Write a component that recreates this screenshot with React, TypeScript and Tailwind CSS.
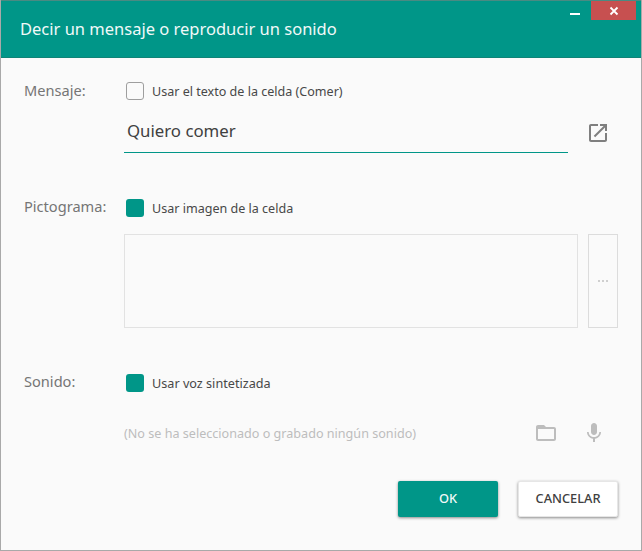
export default function App() {
  const font = { fontFamily: '"Noto Sans", sans-serif' };
  return (
    <div style={font} className="w-[642px] h-[551px] bg-[#fafafa] border border-t-0 border-[#a9a9a9] flex flex-col overflow-hidden">
      <header className="h-[58px] shrink-0 bg-[#009688] border-t border-t-[#4a8a82] border-b border-b-[#0f8477] flex items-start justify-between pl-[19px] pr-[5px]">
        <h1 className="mt-[17px] text-[16.5px] leading-[22px] text-[#f1f9f8] font-normal">Decir un mensaje o reproducir un sonido</h1>
        <div className="flex items-start">
          <div className="mt-[12px] mr-[11px] w-[10px] h-[2px] bg-white" />
          <div className="w-[45px] h-[19px] bg-[#c75050] flex items-center justify-center">
            <svg width="10" height="10" viewBox="0 0 10 10" stroke="white" strokeWidth="1.8"><path d="M1.500 1.500l7 7M8.500 1.500l-7 7" /></svg>
          </div>
        </div>
      </header>

      <main className="flex-1 flex flex-col pl-[23px] pr-[23px]">
        <section className="flex mt-[23px]">
          <div className="w-[100px] shrink-0 text-[14.6px] leading-[19px] text-[#757575]">Mensaje:</div>
          <div className="flex-1">
            <div className="flex items-center pl-[2px] h-[20px]">
              <div className="w-[18px] h-[18px] rounded-[3px] border border-[#9e9e9e] bg-[#fafafa]" />
              <span className="ml-[8px] pt-[2px] text-[12.55px] text-[#484848]">Usar el texto de la celda (Comer)</span>
            </div>
            <div className="flex items-start mt-[11px]">
              <div className="w-[444px] h-[41px] border-b border-b-[#009688] pl-[3px] pt-[8px] text-[16.8px] leading-[22px] text-[#404040]">Quiero comer</div>
              <svg className="ml-[18px] mt-[9px]" width="24" height="24" viewBox="0 0 24 24" fill="#7f7f7f"><path d="M19 19H5V5h7V3H5c-1.110 0-2 .9-2 2v14c0 1.100.89 2 2 2h14c1.100 0 2-.9 2-2v-7h-2v7zM14 3v2h3.590l-9.830 9.830 1.410 1.410L19 6.410V10h2V3h-7z" /></svg>
            </div>
          </div>
        </section>

        <section className="flex mt-[44px]">
          <div className="w-[100px] shrink-0 text-[14.6px] leading-[19px] text-[#757575]">Pictograma:</div>
          <div className="flex-1 pt-[1px]">
            <div className="flex items-center pl-[2px] h-[20px]">
              <div className="w-[18px] h-[18px] rounded-[3px] bg-[#009688]" />
              <span className="ml-[8px] pt-[2px] text-[12.55px] text-[#484848]">Usar imagen de la celda</span>
            </div>
            <div className="flex mt-[16px] h-[94px]">
              <div className="w-[454px] border border-[#e2e2e2]" />
              <div className="ml-[10px] w-[30px] border border-[#dcdcdc] flex items-center justify-center gap-[2px]">
                <span className="w-[2px] h-[2px] bg-[#cfcfcf]" />
                <span className="w-[2px] h-[2px] bg-[#cfcfcf]" />
                <span className="w-[2px] h-[2px] bg-[#cfcfcf]" />
              </div>
            </div>
          </div>
        </section>

        <section className="flex mt-[44px]">
          <div className="w-[100px] shrink-0 text-[14.6px] leading-[19px] text-[#757575]">Sonido:</div>
          <div className="flex-1 pt-[1px]">
            <div className="flex items-center pl-[2px] h-[20px]">
              <div className="w-[18px] h-[18px] rounded-[3px] bg-[#009688]" />
              <span className="ml-[8px] pt-[1px] text-[12.65px] text-[#484848]">Usar voz sintetizada</span>
            </div>
            <div className="flex items-center mt-[28px] h-[24px]">
              <span className="w-[410px] pt-[2px] text-[12.6px] text-[#bdbdbd]">(No se ha seleccionado o grabado ningún sonido)</span>
              <svg width="24" height="24" viewBox="0 0 24 24" fill="#bdbdbd"><path d="M20 6h-8l-2-2H4c-1.100 0-1.990.9-1.990 2L2 18c0 1.100.9 2 2 2h16c1.100 0 2-.9 2-2V8c0-1.100-.9-2-2-2zm0 12H4V8h16v10z" /></svg>
              <svg className="ml-[24px]" width="24" height="24" viewBox="0 0 24 24" fill="#bdbdbd"><path d="M12 14c1.660 0 2.990-1.340 2.990-3L15 5c0-1.660-1.340-3-3-3S9 3.340 9 5v6c0 1.660 1.340 3 3 3zm5.300-3c0 3-2.540 5.100-5.300 5.100S6.700 14 6.700 11H5c0 3.410 2.720 6.230 6 6.720V21h2v-3.280c3.280-.48 6-3.300 6-6.720h-1.700z" /></svg>
            </div>
          </div>
        </section>

        <footer className="flex justify-end gap-[20px] mt-[36px]">
          <button className="w-[100px] h-[36px] rounded-[2px] bg-[#009688] text-[#f1f9f8] text-[12.8px] font-medium shadow-[0_1px_3px_rgba(0,0,0,0.45)]">OK</button>
          <button className="w-[100px] h-[36px] rounded-[2px] bg-white border border-[#e6e6e6] text-[#404040] text-[12.8px] font-medium shadow-[0_1px_3px_rgba(0,0,0,0.45)]">CANCELAR</button>
        </footer>
      </main>
    </div>
  );
}
